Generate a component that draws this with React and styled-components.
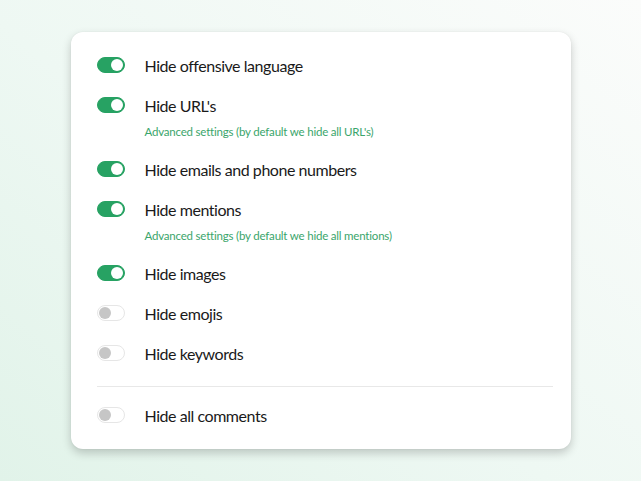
import React from 'react';
import styled, { createGlobalStyle } from 'styled-components';

const GlobalStyle = createGlobalStyle`
  html, body {
    margin: 0;
    padding: 0;
  }
  body {
    font-family: Lato, "Noto Sans", sans-serif;
    background: linear-gradient(40deg, #e1f3e9 0%, #eef8f3 45%, #fbfcfb 100%);
    min-height: 100vh;
  }
`;

const Page = styled.div`
  height: 100vh;
  display: flex;
  align-items: center;
  justify-content: center;
`;

const Card = styled.div`
  width: 500px;
  box-sizing: border-box;
  background: #fff;
  border-radius: 12px;
  box-shadow: 0 4px 10px rgba(0, 0, 0, 0.2), 0 0 2px rgba(0, 0, 0, 0.06);
  padding: 21px 18px 22px 26px;
`;

const List = styled.div`
  display: flex;
  flex-direction: column;
  gap: 16px;
`;

const Item = styled.div`
  display: flex;
  flex-direction: column;
  padding-bottom: ${p => (p.$extra ? '1px' : '0')};
`;

const Row = styled.div`
  display: flex;
  align-items: center;
  height: 24px;
  gap: 20px;
`;

const Track = styled.span`
  position: relative;
  flex: none;
  box-sizing: border-box;
  width: 28px;
  height: 16px;
  border-radius: 8px;
  background: ${p => (p.$on ? '#27a263' : '#fff')};
  border: 1px solid ${p => (p.$on ? '#27a263' : '#e6e6e6')};
`;

const Knob = styled.span`
  position: absolute;
  top: 1px;
  left: ${p => (p.$on ? '13px' : '1px')};
  width: 12px;
  height: 12px;
  border-radius: 50%;
  background: ${p => (p.$on ? '#fff' : '#c6c6c6')};
`;

const Label = styled.span`
  font-size: 16px;
  color: #1a1a1a;
  letter-spacing: -0.45px;
`;

const Advanced = styled.a`
  margin: 7px 0 0 48px;
  font-size: 11.5px;
  line-height: 16px;
  letter-spacing: -0.2px;
  color: #3aa56b;
  text-decoration: none;
  cursor: pointer;
`;

const Divider = styled.hr`
  border: none;
  border-top: 1px solid #e8e8e8;
  margin: 5px 0 0;
`;

const Toggle = ({ on }) => (
  <Track $on={on}>
    <Knob $on={on} />
  </Track>
);

const settings = [
  { label: 'Hide offensive language', on: true },
  { label: "Hide URL's", on: true, advanced: "Advanced settings (by default we hide all URL's)" },
  { label: 'Hide emails and phone numbers', on: true },
  { label: 'Hide mentions', on: true, advanced: 'Advanced settings (by default we hide all mentions)' },
  { label: 'Hide images', on: true },
  { label: 'Hide emojis', on: false },
  { label: 'Hide keywords', on: false },
];

export default function App() {
  return (
    <Page>
      <GlobalStyle />
      <Card>
        <List>
          {settings.map(s => (
            <Item key={s.label} $extra={!!s.advanced}>
              <Row>
                <Toggle on={s.on} />
                <Label>{s.label}</Label>
              </Row>
              {s.advanced && <Advanced>{s.advanced}</Advanced>}
            </Item>
          ))}
          <Divider />
          <Item>
            <Row>
              <Toggle on={false} />
              <Label>Hide all comments</Label>
            </Row>
          </Item>
        </List>
      </Card>
    </Page>
  );
}
